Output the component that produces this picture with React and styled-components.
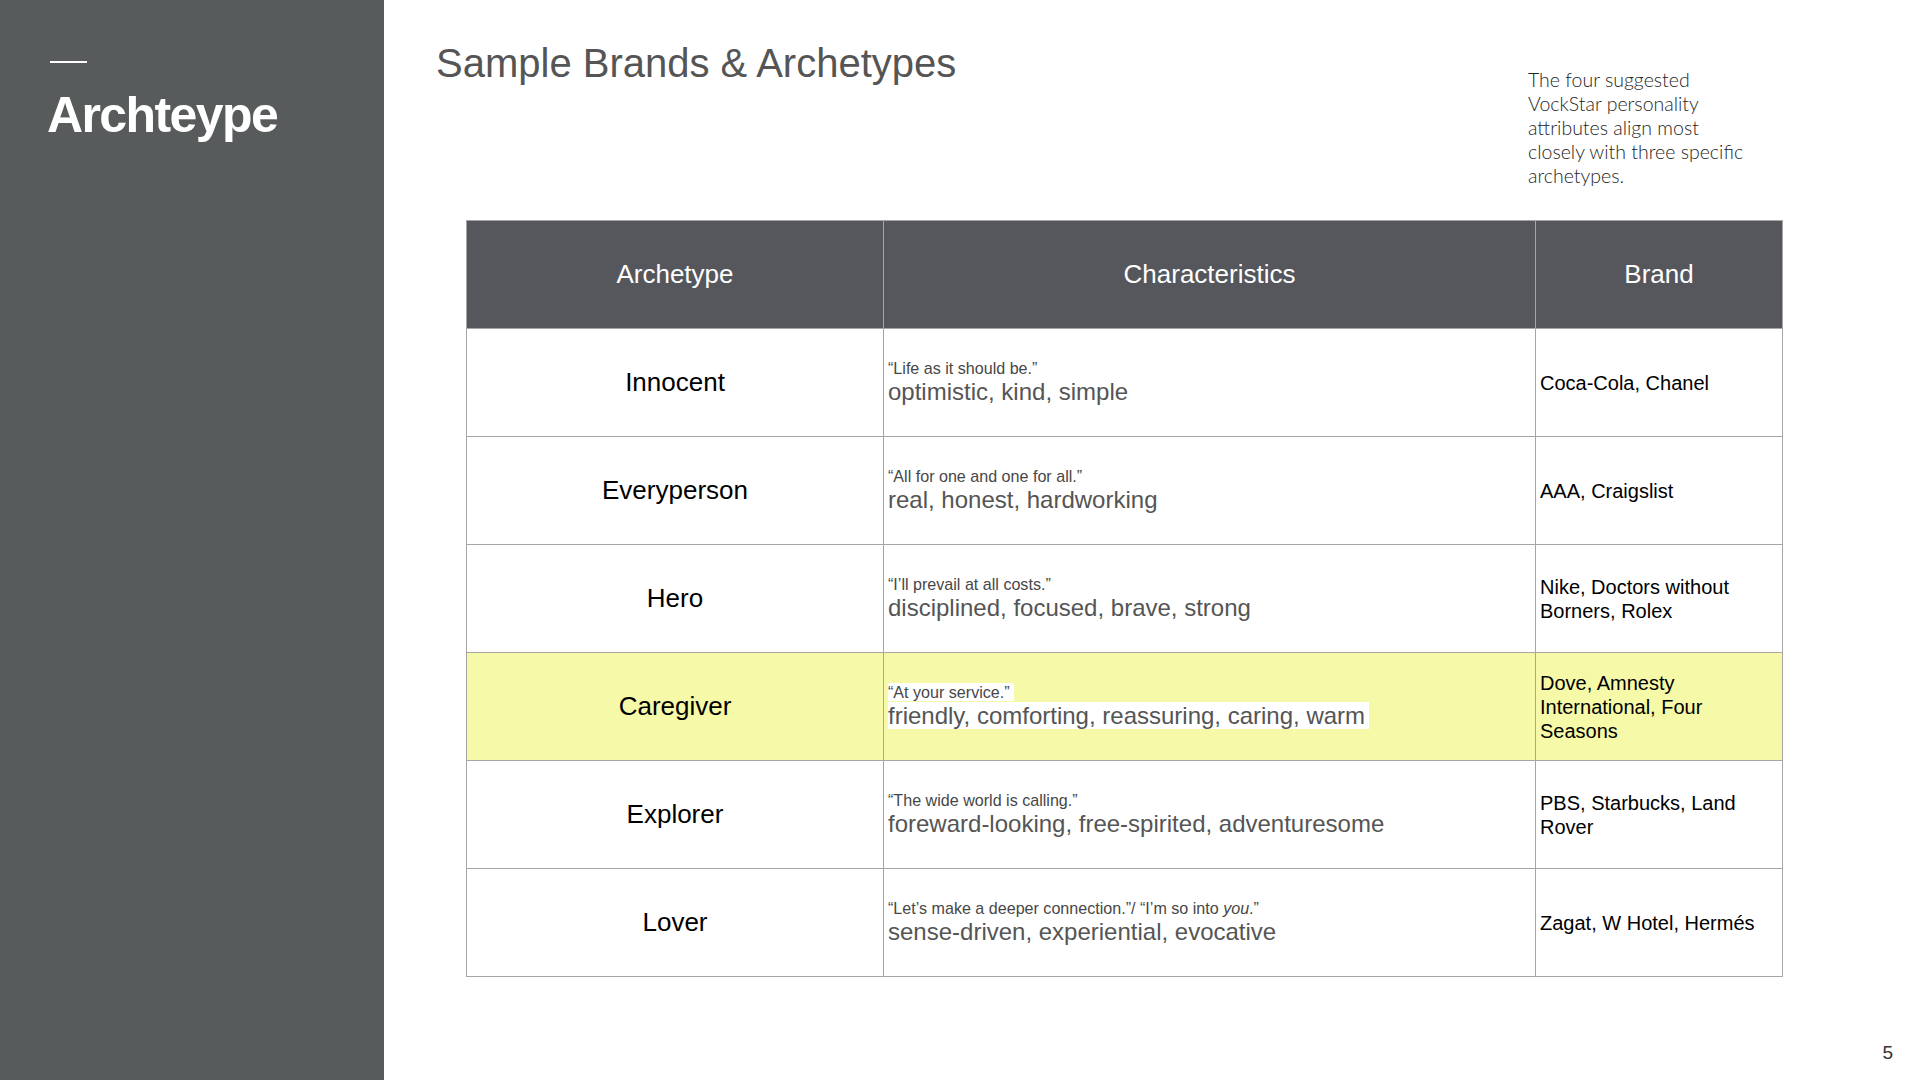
import React from "react";
import styled, { createGlobalStyle } from "styled-components";

const GlobalStyle = createGlobalStyle`
  html, body { margin: 0; padding: 0; background: #ffffff; }
  body { font-family: "Liberation Sans", Arial, sans-serif; }
`;

const Page = styled.div`
  display: flex;
  width: 1920px;
  height: 1080px;
  overflow: hidden;
  background: #ffffff;
`;

const Sidebar = styled.aside`
  flex: 0 0 384px;
  background: #585b5b;
  padding: 61px 0 0 47px;
  box-sizing: border-box;
  display: flex;
  flex-direction: column;
`;

const Dash = styled.div`
  width: 37px;
  height: 2px;
  margin-left: 3px;
  background: #ffffff;
`;

const SideTitle = styled.h1`
  margin: 24px 0 0;
  font-family: "Liberation Sans", Arial, sans-serif;
  font-weight: 700;
  font-size: 50px;
  line-height: 56px;
  letter-spacing: -1.6px;
  color: #ffffff;
`;

const Main = styled.main`
  flex: 1;
  position: relative;
  display: flex;
  flex-direction: column;
`;

const HeaderRow = styled.header`
  height: 220px;
  display: flex;
  align-items: flex-start;
  padding-left: 52px;
  box-sizing: border-box;
`;

const Title = styled.h2`
  margin: 40px 0 0;
  font-family: "Liberation Sans", Arial, sans-serif;
  font-weight: 400;
  font-size: 40px;
  line-height: 46px;
  color: #555555;
`;

const Intro = styled.p`
  margin: 68px 0 0 auto;
  margin-right: 170px;
  width: 222px;
  font-family: "Lato", "Liberation Sans", sans-serif;
  font-weight: 300;
  font-size: 19.5px;
  line-height: 24px;
  color: #262626;
`;

const Table = styled.table`
  margin-left: 82px;
  width: 1316px;
  border-collapse: collapse;
  table-layout: fixed;
  font-family: "Liberation Sans", Arial, sans-serif;
`;

const HeadCell = styled.th`
  height: 107px;
  padding: 0;
  background: #55575c;
  border: 1px solid #a6a6a6;
  color: #ffffff;
  font-weight: 400;
  font-size: 26px;
  text-align: center;
  vertical-align: middle;
`;

const Row = styled.tr`
  background: ${(p) => (p.$highlight ? "#f6f9a7" : "#ffffff")};
`;

const NameCell = styled.td`
  height: 107px;
  padding: 0;
  border: 1px solid #a6a6a6;
  text-align: center;
  vertical-align: middle;
  font-size: 26px;
  color: #000000;
`;

const TraitCell = styled.td`
  padding: 0 6px 2px 4px;
  border: 1px solid #a6a6a6;
  vertical-align: middle;
`;

const Quote = styled.div`
  font-size: 16.1px;
  line-height: 19px;
  color: #474747;
`;

const Traits = styled.div`
  font-size: 24px;
  line-height: 27px;
  color: #555555;
`;

const Mark = styled.span`
  background: ${(p) => (p.$on ? "#ffffff" : "transparent")};
  padding-right: ${(p) => (p.$on ? "4px" : "0")};
`;

const BrandCell = styled.td`
  padding: 0 4px 0 4px;
  border: 1px solid #a6a6a6;
  vertical-align: middle;
  font-size: 20px;
  line-height: 24px;
  color: #000000;
`;

const PageNum = styled.div`
  position: absolute;
  right: 27px;
  bottom: 16px;
  font-family: "Liberation Sans", Arial, sans-serif;
  font-size: 19px;
  color: #333333;
`;

const rows = [
  {
    name: "Innocent",
    quote: "“Life as it should be.”",
    traits: "optimistic, kind, simple",
    brand: "Coca-Cola, Chanel",
  },
  {
    name: "Everyperson",
    quote: "“All for one and one for all.”",
    traits: "real, honest, hardworking",
    brand: "AAA, Craigslist",
  },
  {
    name: "Hero",
    quote: "“I’ll prevail at all costs.”",
    traits: "disciplined, focused, brave, strong",
    brand: "Nike, Doctors without Borners, Rolex",
  },
  {
    name: "Caregiver",
    quote: "“At your service.”",
    traits: "friendly, comforting, reassuring, caring, warm",
    brand: "Dove, Amnesty International, Four Seasons",
    highlight: true,
  },
  {
    name: "Explorer",
    quote: "“The wide world is calling.”",
    traits: "foreward-looking, free-spirited, adventuresome",
    brand: "PBS, Starbucks, Land Rover",
  },
  {
    name: "Lover",
    quote: (
      <>
        “Let’s make a deeper connection.”/ “I’m so into <em>you</em>.”
      </>
    ),
    traits: "sense-driven, experiential, evocative",
    brand: "Zagat, W Hotel, Hermés",
  },
];

export default function App() {
  return (
    <>
      <GlobalStyle />
      <Page>
        <Sidebar>
          <Dash />
          <SideTitle>Archteype</SideTitle>
        </Sidebar>
        <Main>
          <HeaderRow>
            <Title>Sample Brands &amp; Archetypes</Title>
            <Intro>
              The four suggested VockStar personality attributes align most
              closely with three specific archetypes.
            </Intro>
          </HeaderRow>
          <Table>
            <colgroup>
              <col style={{ width: "417px" }} />
              <col style={{ width: "652px" }} />
              <col style={{ width: "247px" }} />
            </colgroup>
            <thead>
              <tr>
                <HeadCell>Archetype</HeadCell>
                <HeadCell>Characteristics</HeadCell>
                <HeadCell>Brand</HeadCell>
              </tr>
            </thead>
            <tbody>
              {rows.map((r) => (
                <Row key={r.name} $highlight={r.highlight}>
                  <NameCell>{r.name}</NameCell>
                  <TraitCell>
                    <Quote>
                      <Mark $on={r.highlight}>{r.quote}</Mark>
                    </Quote>
                    <Traits>
                      <Mark $on={r.highlight}>{r.traits}</Mark>
                    </Traits>
                  </TraitCell>
                  <BrandCell>{r.brand}</BrandCell>
                </Row>
              ))}
            </tbody>
          </Table>
          <PageNum>5</PageNum>
        </Main>
      </Page>
    </>
  );
}
